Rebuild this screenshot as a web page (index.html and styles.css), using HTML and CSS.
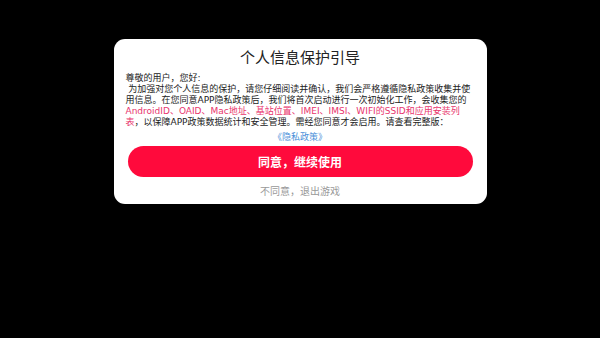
FILE: index.html
```html
<!DOCTYPE html>
<html lang="zh-CN">
<head>
<meta charset="utf-8">
<link rel="stylesheet" href="styles.css">
</head>
<body>
<div class="dialog">
  <div class="title">个人信息保护引导</div>
  <div class="body">
    <p class="text">尊敬的用户，您好:<br>&nbsp;为加强对您个人信息的保护，请您仔细阅读并确认，我们会严格遵循隐私政策收集并使用信息。在您同意APP隐私政策后，我们将首次启动进行一次初始化工作，会收集您的<span class="red">AndroidID、OAID、Mac地址、基站位置、IMEI、IMSI、WIFI的SSID和应用安装列</span><span class="red">表</span>，以保障APP政策数据统计和安全管理。需经您同意才会启用。请查看完整版：</p>
    <p class="link">《隐私政策》</p>
  </div>
  <div class="agree">同意，继续使用</div>
  <div class="refuse">不同意，退出游戏</div>
</div>
</body>
</html>
```
FILE: styles.css
```css
html, body {
  margin: 0;
  padding: 0;
  background: #000;
  width: 600px;
  height: 338px;
  overflow: hidden;
}
body {
  font-family: "DejaVu Sans", "Noto Sans CJK SC", sans-serif;
  display: flex;
  justify-content: center;
  align-items: flex-start;
}
.dialog {
  margin-top: 39px;
  width: 373px;
  height: 165px;
  box-sizing: border-box;
  background: #fff;
  border-radius: 11px;
  padding: 8px 12px 0 12px;
  display: flex;
  flex-direction: column;
}
.title {
  font-family: "Noto Sans CJK SC", sans-serif;
  font-size: 15px;
  line-height: 20px;
  text-align: center;
  color: #222;
}
.body {
  margin-top: 6.4px;
}
.text {
  margin: 0;
  font-size: 9px;
  line-height: 10.8px;
  color: #222;
}
.red {
  color: #e8356d;
}
.link {
  margin: 4.4px 0 0 0;
  font-size: 9px;
  line-height: 10.8px;
  text-align: center;
  color: #4a90d9;
}
.agree {
  margin: 3.4px 2px 0 2px;
  height: 31px;
  border-radius: 16px;
  background: #ff0a3c;
  color: #fff;
  font-family: "Noto Sans CJK SC", sans-serif;
  font-weight: bold;
  font-size: 12px;
  line-height: 31px;
  text-align: center;
}
.refuse {
  margin-top: 7.7px;
  font-family: "Noto Sans CJK SC", sans-serif;
  font-size: 10px;
  line-height: 12px;
  text-align: center;
  color: #999;
}
```
